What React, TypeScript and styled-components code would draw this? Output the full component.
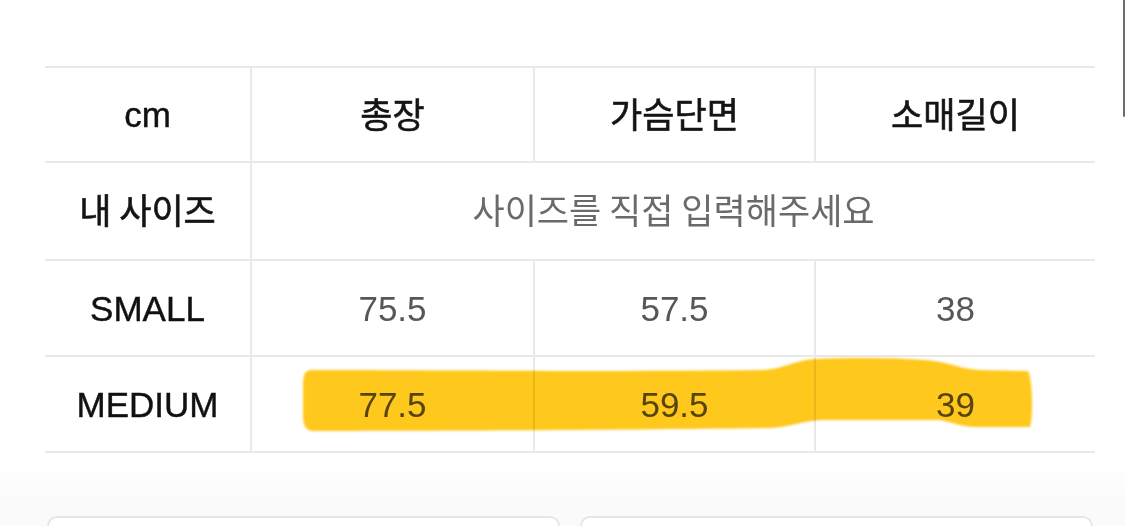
import React from "react";
import styled, { createGlobalStyle } from "styled-components";

const GlobalStyle = createGlobalStyle`
  html, body {
    margin: 0;
    padding: 0;
    background: #ffffff;
  }
  body {
    font-family: "Liberation Sans", "Noto Sans CJK KR", Arial, sans-serif;
  }
  * { box-sizing: border-box; }
`;

const Page = styled.div`
  position: relative;
  width: 1125px;
  height: 526px;
  overflow: hidden;
  padding: 66px 30px 0 45px;
  background: linear-gradient(180deg, #ffffff 0px, #ffffff 460px, #fbfbfb 495px, #fafafa 526px);
`;

const LINE = "#e9e9e9";

const Table = styled.div`
  display: grid;
  width: 1050px;
  grid-template-columns: 205px 283px 281px 281px;
  grid-template-rows: 95px 98px 96px 96px;
  border-top: 2px solid ${LINE};
`;

type Tone = "head" | "label" | "value" | "hint";

const toneStyles: Record<Tone, string> = {
  head: `color: #141414; font-size: 35px; font-weight: 400; -webkit-text-stroke: 0.6px #141414;`,
  label: `color: #111111; font-size: 35px; font-weight: 400; -webkit-text-stroke: 0.4px #111111;`,
  value: `color: #575757; font-size: 35px; font-weight: 400;`,
  hint: `color: #6a6a6a; font-size: 35px; font-weight: 400;`,
};

const Cell = styled.div<{ $tone: Tone; $span?: number; $first?: boolean }>`
  display: flex;
  align-items: center;
  justify-content: center;
  border-bottom: 2px solid ${LINE};
  border-left: ${(p) => (p.$first ? "none" : `2px solid ${LINE}`)};
  grid-column: span ${(p) => p.$span ?? 1};
  line-height: 1;
  white-space: nowrap;
  ${(p) => toneStyles[p.$tone]}
`;

const KoText = styled.span`
  display: inline-block;
  font-family: "Noto Sans CJK KR", sans-serif;
  letter-spacing: 0;
  padding-bottom: 5px;
`;

const ButtonRow = styled.div`
  display: flex;
  gap: 20px;
  padding: 0 2px;
  margin-top: 63px;
  width: 1050px;
`;

const GhostButton = styled.div`
  flex: 1;
  height: 60px;
  background: #ffffff;
  border: 2px solid #e6e6e6;
  border-radius: 10px;
`;

const Highlight = styled.svg`
  position: absolute;
  left: 0;
  top: 0;
  width: 1125px;
  height: 526px;
  pointer-events: none;
  mix-blend-mode: multiply;
`;

const ScrollThumb = styled.div`
  position: absolute;
  right: 0;
  top: 0;
  width: 2px;
  height: 117px;
  border-radius: 0 0 2px 2px;
  background: #6c6c6c;
`;

const headers = ["총장", "가슴단면", "소매길이"];
const rows: { label: string; values: string[] }[] = [
  { label: "SMALL", values: ["75.5", "57.5", "38"] },
  { label: "MEDIUM", values: ["77.5", "59.5", "39"] },
];

export default function App() {
  return (
    <>
      <GlobalStyle />
      <Page>
        <Table>
          <Cell $tone="label" $first>
            cm
          </Cell>
          {headers.map((h) => (
            <Cell key={h} $tone="head">
              <KoText>{h}</KoText>
            </Cell>
          ))}
          <Cell $tone="head" $first>
            <KoText>내 사이즈</KoText>
          </Cell>
          <Cell $tone="hint" $span={3}>
            <KoText>사이즈를 직접 입력해주세요</KoText>
          </Cell>
          {rows.map((r) => (
            <React.Fragment key={r.label}>
              <Cell $tone="label" $first>
                {r.label}
              </Cell>
              {r.values.map((v, i) => (
                <Cell key={i} $tone="value">
                  {v}
                </Cell>
              ))}
            </React.Fragment>
          ))}
        </Table>
        <ButtonRow>
          <GhostButton />
          <GhostButton />
        </ButtonRow>
        <Highlight viewBox="0 0 1125 526">
          <defs>
            <filter id="soft" x="-5%" y="-20%" width="110%" height="140%">
              <feGaussianBlur stdDeviation="1.2" />
            </filter>
          </defs>
          <path
            filter="url(#soft)"
            fill="#ffc81c"
            d="M 312 370
               C 420 370, 620 372, 762 370
               C 785 369, 795 360, 815 359
               C 860 357, 900 358, 925 360
               C 950 362, 960 369, 980 370
               L 1028 371
               C 1033 380, 1033 418, 1030 427
               L 975 427
               C 955 426, 950 420, 935 420
               L 822 420
               C 800 421, 790 428, 765 428
               C 620 430, 420 431, 314 431
               C 305 431, 303 424, 303 416
               L 303 385
               C 303 375, 305 370, 312 370 Z"
          />
        </Highlight>
        <ScrollThumb />
      </Page>
    </>
  );
}
